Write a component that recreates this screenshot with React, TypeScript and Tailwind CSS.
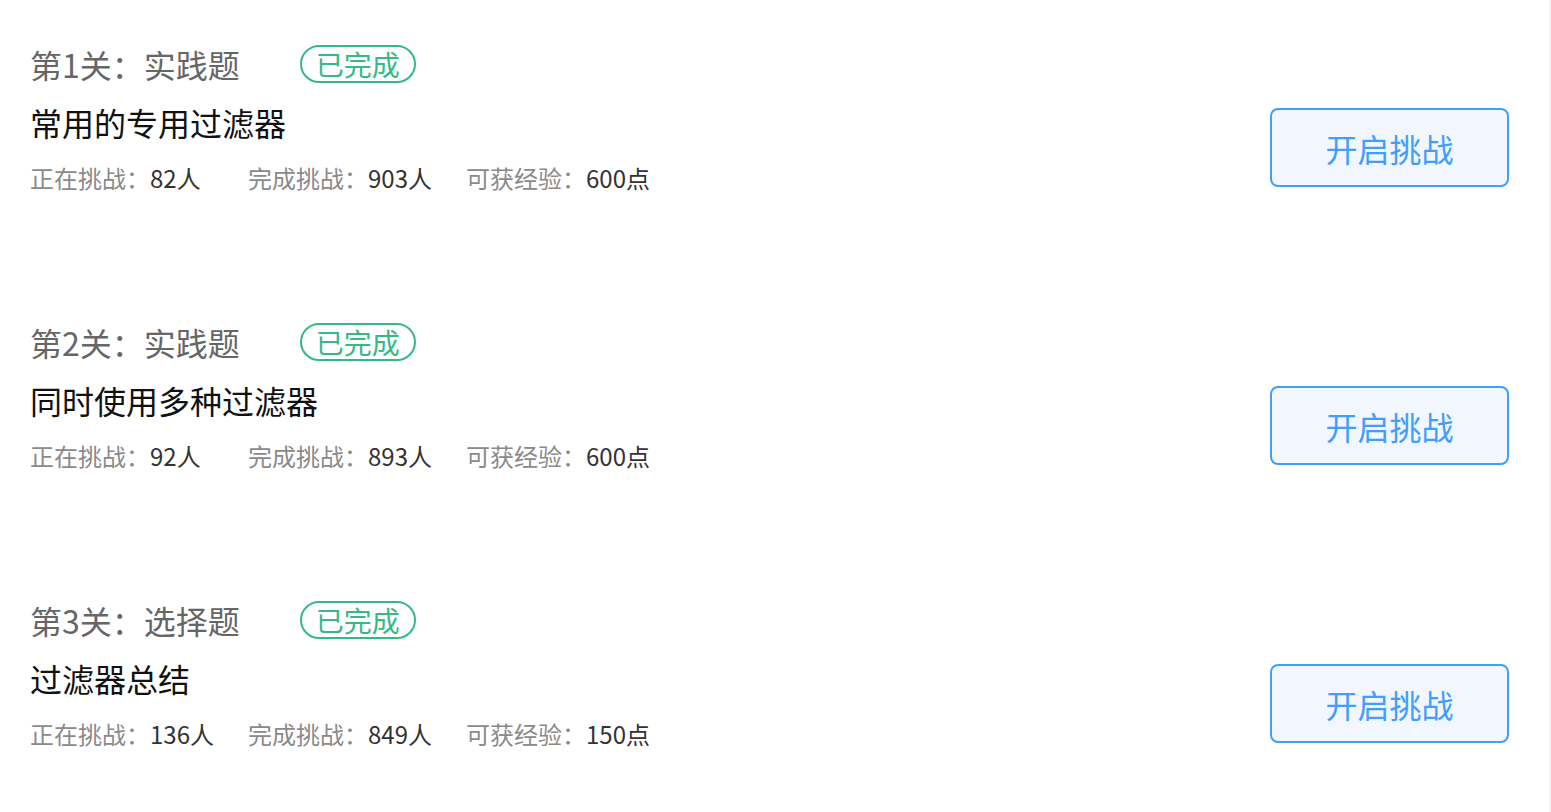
import React from 'react';

const levels = [
  { no: 1, kind: '实践题', name: '常用的专用过滤器', doing: 82, done: 903, exp: 600 },
  { no: 2, kind: '实践题', name: '同时使用多种过滤器', doing: 92, done: 893, exp: 600 },
  { no: 3, kind: '选择题', name: '过滤器总结', doing: 136, done: 849, exp: 150 },
];

function Stat({ label, value }: { label: string; value: string }) {
  return (
    <span className="w-[218px] shrink-0 text-[24px] leading-[36px]">
      <span className="text-[#8a8a8a]">{label}：</span>
      <span className="text-[#333]">{value}</span>
    </span>
  );
}

function App() {
  return (
    <div
      className="min-h-screen bg-white border-r-2 border-[#f3f3f3] pl-[30px] pr-[40px] pt-[42px]"
      style={{ fontFamily: '"Noto Sans CJK SC", "Noto Sans", sans-serif' }}
    >
      {levels.map((lv) => (
        <div key={lv.no} className="flex justify-between items-start mb-[124px]">
          <div className="flex flex-col">
            <div className="flex items-center h-[44px]">
              <span className="text-[32px] leading-[44px] text-[#666]">
                第{lv.no}关：{lv.kind}
              </span>
              <span className="ml-[60px] h-[38px] flex items-center px-[14px] rounded-full border-2 border-[#34b987] text-[#34b987] text-[28px] leading-none">
                已完成
              </span>
            </div>
            <div className="mt-[14px] text-[32px] leading-[44px] text-[#111]">{lv.name}</div>
            <div className="mt-[16px] flex">
              <Stat label="正在挑战" value={`${lv.doing}人`} />
              <Stat label="完成挑战" value={`${lv.done}人`} />
              <Stat label="可获经验" value={`${lv.exp}点`} />
            </div>
          </div>
          <button className="mt-[66px] w-[239px] h-[79px] rounded-[8px] border-2 border-[#409eff] bg-[#f2f7ff] text-[#409eff] text-[32px]">
            开启挑战
          </button>
        </div>
      ))}
    </div>
  );
}

export default App;
